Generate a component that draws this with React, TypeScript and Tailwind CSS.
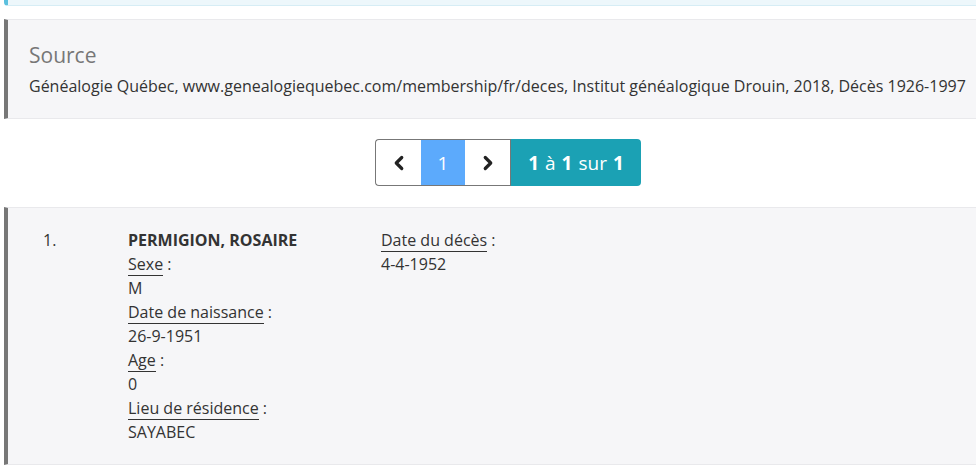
import { ChevronLeft, ChevronRight } from 'lucide-react';

const fields = [
  { label: 'Sexe', value: 'M' },
  { label: 'Date de naissance', value: '26-9-1951' },
  { label: 'Age', value: '0' },
  { label: 'Lieu de résidence', value: 'SAYABEC' },
];

function Label({ text }: { text: string }) {
  return (
    <div>
      <span className="border-b border-[#333]">{text}</span> :
    </div>
  );
}

export default function App() {
  return (
    <div
      className="min-h-[469px] bg-white pl-1 text-[16px] leading-6 text-[#333]"
      style={{ fontFamily: '"Open Sans", "Liberation Sans", sans-serif' }}
    >
      <div className="h-[6px] rounded-bl-[4px] border-b border-l-4 border-[#d6edf5] border-l-[#5bc0de] bg-[#edf7fb]" />

      <div className="mt-[13px] border-y border-l-4 border-[#e9e9ec] border-l-[#777] bg-[#f6f6f8] pt-[21px] pb-[20px] pl-[21px]">
        <h3 className="text-[21px] leading-7 text-[#777]">Source</h3>
        <p className="mt-[5px] whitespace-nowrap text-[16px] leading-6">
          Généalogie Québec, www.genealogiequebec.com/membership/fr/deces, Institut généalogique Drouin, 2018, Décès
          1926-1997
        </p>
      </div>

      <div className="flex justify-center pt-5 pb-[21px] pr-1 pl-[40px]">
        <div className="flex h-[47px] text-[19px]">
          <button className="flex w-[46px] items-center justify-center rounded-l-[4px] border border-r-0 border-[#777] bg-white text-[#222]">
            <ChevronLeft className="h-[22px] w-[22px]" strokeWidth={3.5} />
          </button>
          <button className="flex w-[44px] items-center justify-center border-y border-[#777] bg-[#5caafc] text-white">
            1
          </button>
          <button className="flex w-[46px] items-center justify-center border border-l-0 border-[#777] bg-white text-[#222]">
            <ChevronRight className="h-[22px] w-[22px]" strokeWidth={3.5} />
          </button>
          <div className="flex w-[130px] items-center justify-center gap-[6px] rounded-r-[4px] bg-[#1ba1b4] text-white">
            <span className="font-bold">1</span>
            <span>à</span>
            <span className="font-bold">1</span>
            <span>sur</span>
            <span className="font-bold">1</span>
          </div>
        </div>
      </div>

      <div className="flex border-y border-l-4 border-[#e9e9ec] border-l-[#777] bg-[#f6f6f8] pt-[20px] pb-[20px] pl-[35px]">
        <div className="w-[85px]">1.</div>
        <div className="w-[253px]">
          <div className="font-bold">PERMIGION, ROSAIRE</div>
          {fields.map((f) => (
            <div key={f.label}>
              <Label text={f.label} />
              <div>{f.value}</div>
            </div>
          ))}
        </div>
        <div>
          <Label text="Date du décès" />
          <div>4-4-1952</div>
        </div>
      </div>
    </div>
  );
}
